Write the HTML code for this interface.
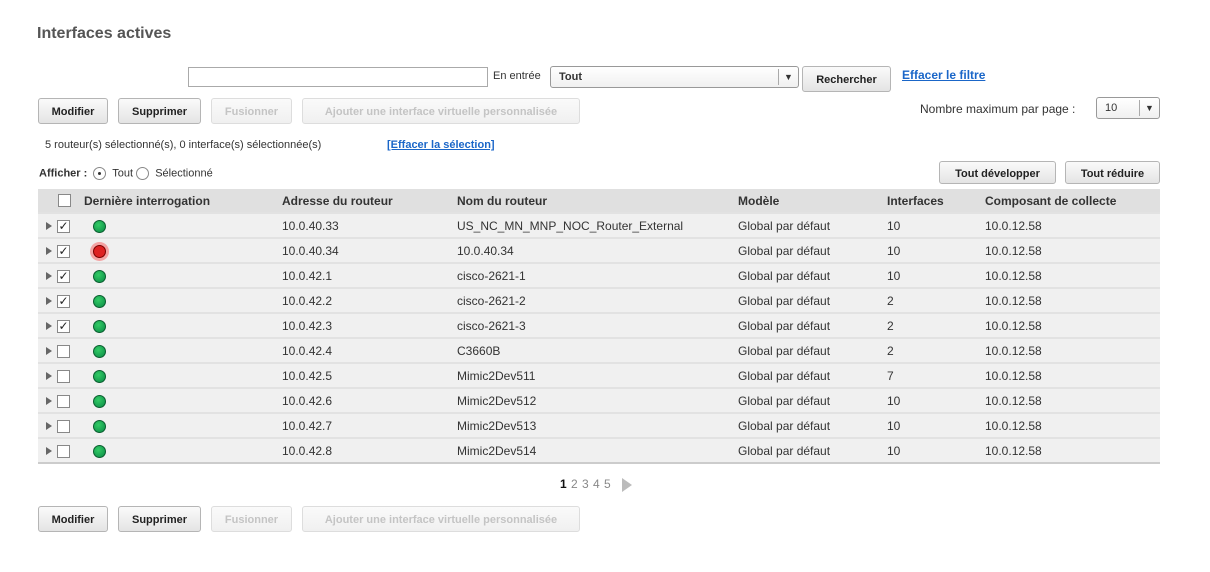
<!DOCTYPE html>
<html><head><meta charset="utf-8"><style>
*{box-sizing:border-box;margin:0;padding:0}
body{width:1210px;height:572px;background:#fff;font-family:"Liberation Sans",Arial,sans-serif;font-size:12px;color:#333;position:relative;overflow:hidden}
.a{position:absolute;white-space:nowrap}
.btn{position:absolute;height:26px;border:1px solid #b5b5b5;border-radius:3px;background:linear-gradient(#fafafa,#e4e4e4);font-weight:bold;font-size:11px;color:#222;display:flex;align-items:center;justify-content:center;padding-top:2px}
.btn.d{color:#c4c4c4;border-color:#ddd;background:linear-gradient(#fafafa,#f0f0f0)}
.link{color:#1a66c8;text-decoration:underline;font-weight:bold}
table{position:absolute;left:38px;top:189px;width:1122px;border-collapse:collapse}
th{background:#e0e0e0;height:24px;line-height:20px;text-align:left;font-weight:bold;font-size:12px;color:#333;vertical-align:middle;white-space:nowrap}
td{background:#f0f0f0;height:25px;border-top:2px solid #e2e2e2;font-size:12px;color:#333;vertical-align:middle}
tr:last-child td{border-bottom:2px solid #ccc}
.cb{display:inline-block;width:13px;height:13px;border:1px solid #888;background:#fff;vertical-align:middle;position:relative;font-size:12px;line-height:11px;text-align:center;color:#222}
.tri{display:inline-block;width:0;height:0;border-left:6px solid #666;border-top:4px solid transparent;border-bottom:4px solid transparent;vertical-align:middle;margin:0 5px 0 8px}
.dot{display:inline-block;width:13px;height:13px;border-radius:50%;background:radial-gradient(circle at 40% 35%,#3c6,#0a8a45);border:1px solid #0b5e30;vertical-align:middle;margin-left:23px}
.red{background:#d22;border:1px solid #700;box-shadow:0 0 0 3px #f4a3a3}
.sel{position:absolute;border:1px solid #999;border-radius:3px;background:linear-gradient(#fff,#f0f0f0);font-size:11px;font-weight:bold;padding-left:8px;line-height:20px}
.rad{display:inline-block;width:13px;height:13px;border:1px solid #888;border-radius:50%;vertical-align:middle;background:#fff;position:relative}
</style></head><body>
<div class="a" style="left:37px;top:25px;font-size:16px;font-weight:bold;color:#555">Interfaces actives</div>

<div class="a" style="left:188px;top:67px;width:300px;height:20px;border:1px solid #aaa"></div>
<div class="a" style="left:493px;top:70px;font-size:11px">En entrée</div>
<div class="sel" style="left:550px;top:66px;width:249px;height:22px">Tout<span style="position:absolute;right:0;top:2px;width:20px;height:16px;border-left:1px solid #aaa;text-align:center;line-height:16px;font-size:9px">▼</span></div>
<div class="btn" style="left:802px;top:66px;width:89px">Rechercher</div>
<div class="a link" style="left:902px;top:68px;font-size:12px">Effacer le filtre</div>

<div class="btn" style="left:38px;top:98px;width:70px">Modifier</div>
<div class="btn" style="left:118px;top:98px;width:83px">Supprimer</div>
<div class="btn d" style="left:211px;top:98px;width:81px">Fusionner</div>
<div class="btn d" style="left:302px;top:98px;width:278px">Ajouter une interface virtuelle personnalisée</div>

<div class="a" style="left:920px;top:102px;font-size:12px">Nombre maximum par page :</div>
<div class="sel" style="left:1096px;top:97px;width:64px;height:22px;font-weight:normal">10<span style="position:absolute;right:0;top:2px;width:20px;height:16px;border-left:1px solid #aaa;text-align:center;line-height:16px;font-size:9px">▼</span></div>

<div class="a" style="left:45px;top:139px;font-size:11px">5 routeur(s) sélectionné(s), 0 interface(s) sélectionnée(s)</div>
<div class="a link" style="left:387px;top:139px;font-size:11px">[Effacer la sélection]</div>

<div class="a" style="left:39px;top:167px;font-size:11px"><b>Afficher :</b> <span class="rad" style="margin-left:3px"><span style="position:absolute;left:4px;top:4px;width:3px;height:3px;background:#333;border-radius:50%"></span></span>&nbsp; Tout <span class="rad"></span>&nbsp; Sélectionné</div>
<div class="btn" style="left:939px;top:161px;width:117px;height:23px">Tout développer</div>
<div class="btn" style="left:1065px;top:161px;width:95px;height:23px">Tout réduire</div>

<table>
<tr><th style="width:244px;position:relative;padding-left:46px"><span class="cb" style="position:absolute;left:20px;top:5px"></span>Dernière interrogation</th><th style="width:175px">Adresse du routeur</th><th style="width:281px">Nom du routeur</th><th style="width:149px">Modèle</th><th style="width:98px">Interfaces</th><th>Composant de collecte</th></tr>
<tr><td><span class="tri"></span><span class="cb">✓</span><span class="dot"></span></td><td>10.0.40.33</td><td>US_NC_MN_MNP_NOC_Router_External</td><td>Global par défaut</td><td>10</td><td>10.0.12.58</td></tr>
<tr><td><span class="tri"></span><span class="cb">✓</span><span class="dot red"></span></td><td>10.0.40.34</td><td>10.0.40.34</td><td>Global par défaut</td><td>10</td><td>10.0.12.58</td></tr>
<tr><td><span class="tri"></span><span class="cb">✓</span><span class="dot"></span></td><td>10.0.42.1</td><td>cisco-2621-1</td><td>Global par défaut</td><td>10</td><td>10.0.12.58</td></tr>
<tr><td><span class="tri"></span><span class="cb">✓</span><span class="dot"></span></td><td>10.0.42.2</td><td>cisco-2621-2</td><td>Global par défaut</td><td>2</td><td>10.0.12.58</td></tr>
<tr><td><span class="tri"></span><span class="cb">✓</span><span class="dot"></span></td><td>10.0.42.3</td><td>cisco-2621-3</td><td>Global par défaut</td><td>2</td><td>10.0.12.58</td></tr>
<tr><td><span class="tri"></span><span class="cb"></span><span class="dot"></span></td><td>10.0.42.4</td><td>C3660B</td><td>Global par défaut</td><td>2</td><td>10.0.12.58</td></tr>
<tr><td><span class="tri"></span><span class="cb"></span><span class="dot"></span></td><td>10.0.42.5</td><td>Mimic2Dev511</td><td>Global par défaut</td><td>7</td><td>10.0.12.58</td></tr>
<tr><td><span class="tri"></span><span class="cb"></span><span class="dot"></span></td><td>10.0.42.6</td><td>Mimic2Dev512</td><td>Global par défaut</td><td>10</td><td>10.0.12.58</td></tr>
<tr><td><span class="tri"></span><span class="cb"></span><span class="dot"></span></td><td>10.0.42.7</td><td>Mimic2Dev513</td><td>Global par défaut</td><td>10</td><td>10.0.12.58</td></tr>
<tr><td><span class="tri"></span><span class="cb"></span><span class="dot"></span></td><td>10.0.42.8</td><td>Mimic2Dev514</td><td>Global par défaut</td><td>10</td><td>10.0.12.58</td></tr>
</table>

<div class="a" style="left:560px;top:477px;font-size:12px;color:#888;word-spacing:1px"><b style="color:#111">1</b> 2 3 4 5 <span style="display:inline-block;width:0;height:0;border-left:10px solid #bbb;border-top:7px solid transparent;border-bottom:7px solid transparent;vertical-align:middle;margin-left:7px"></span></div>

<div class="btn" style="left:38px;top:506px;width:70px">Modifier</div>
<div class="btn" style="left:118px;top:506px;width:83px">Supprimer</div>
<div class="btn d" style="left:211px;top:506px;width:81px">Fusionner</div>
<div class="btn d" style="left:302px;top:506px;width:278px">Ajouter une interface virtuelle personnalisée</div>
</body></html>
